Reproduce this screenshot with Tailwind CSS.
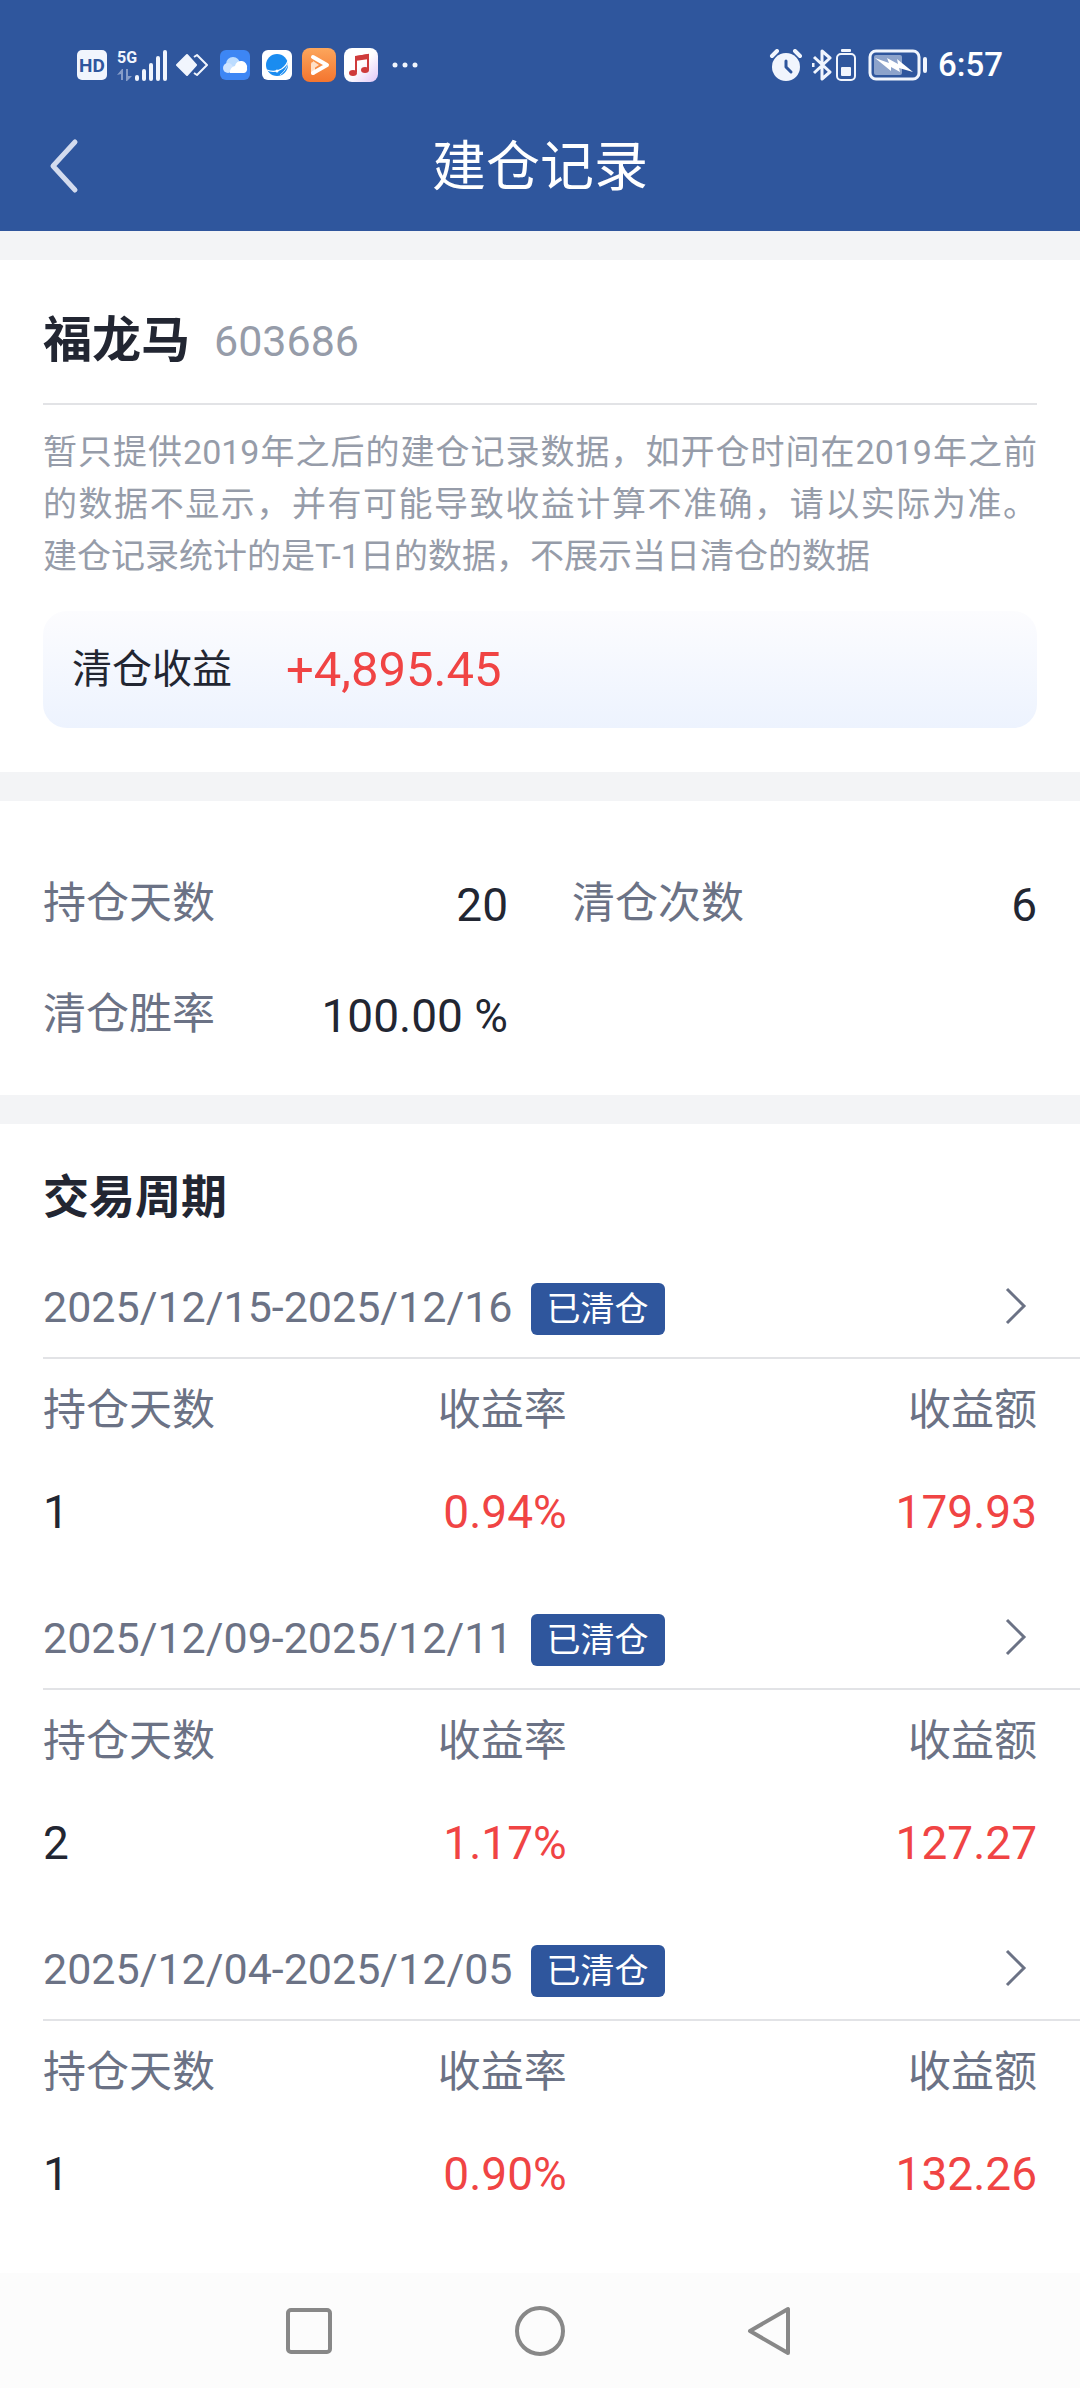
<!DOCTYPE html>
<html lang="zh-CN">
<head>
    <meta charset="UTF-8">
    <meta name="viewport" content="width=device-width, initial-scale=1.0">
    <title>建仓记录</title>
    <script src="https://cdn.jsdelivr.net/npm/@tailwindcss/browser@4"></script>
</head>
<body class="min-h-screen flex flex-col bg-gray-100 text-[#222632] font-['Roboto','Noto_Sans_CJK_SC',sans-serif]">
    <!-- Header -->
    <header class="bg-[#2f569d] text-white">
        <!-- Status bar -->
        <div class="h-[104px] pt-[26px] px-[77px] flex items-center justify-between">
            <div class="flex items-center">
                <svg class="w-[30px] h-[30px]" viewBox="0 0 30 30">
                    <rect width="30" height="30" rx="5" fill="#f1f5fd"/>
                    <text x="15" y="22" text-anchor="middle" font-family="Roboto" font-weight="700" font-size="19" fill="#2f569d">HD</text>
                </svg>
                <svg class="w-[51px] h-[34px] ml-[10px]" viewBox="0 0 51 34" fill="#f1f5fd">
                    <text x="0" y="15" font-family="Roboto" font-weight="700" font-size="16">5G</text>
                    <path d="M0 27l5-6h1v11H4v-6zM9 21h2v7h4l-5 5H9z" opacity=".45"/>
                    <rect x="18" y="27" width="4" height="6" rx="2"/>
                    <rect x="25" y="21" width="4" height="12" rx="2"/>
                    <rect x="32" y="15" width="4" height="18" rx="2"/>
                    <rect x="39" y="8" width="4" height="25" rx="2"/>
                    <rect x="46" y="2" width="4" height="31" rx="2"/>
                </svg>
                <svg class="w-[32px] h-[24px] ml-[8px]" viewBox="0 0 32 24">
                    <path d="M11 2l9 10-9 10L1 12z" fill="#f1f5fd" stroke="#f1f5fd" stroke-width="2" stroke-linejoin="round"/>
                    <path d="M18 4l3-2 10 10-10 10-3-2" fill="none" stroke="#f1f5fd" stroke-width="2" stroke-linejoin="round"/>
                </svg>
                <svg class="w-[30px] h-[30px] ml-[12px]" viewBox="0 0 30 30">
                    <rect width="30" height="30" rx="6" fill="#3d86f4"/>
                    <circle cx="13" cy="14" r="7" fill="#bcdcff"/>
                    <circle cx="8" cy="18" r="5" fill="#cfe4ff"/>
                    <path d="M10 23a6 6 0 0 1 5-7 6 6 0 0 1 12 2 4 4 0 0 1-3 5z" fill="#fff"/>
                </svg>
                <svg class="w-[30px] h-[30px] ml-[12px]" viewBox="0 0 30 30">
                    <rect width="30" height="30" rx="6" fill="#fff"/>
                    <circle cx="15" cy="15" r="11" fill="#1a8cf0"/>
                    <path d="M5 20c7 3 17 1 21-9" fill="none" stroke="#fff" stroke-width="1.2"/>
                    <path d="M18 25c4-3 7-7 8-12" fill="none" stroke="#fff" stroke-width="0.8"/>
                    <circle cx="15" cy="21" r="1.5" fill="#fff"/>
                </svg>
                <svg class="w-[34px] h-[34px] ml-[10px]" viewBox="0 0 34 34">
                    <defs>
                        <linearGradient id="video" x1="0" y1="0" x2="0" y2="1"><stop stop-color="#fca65c"/><stop offset="1" stop-color="#f4752f"/></linearGradient>
                    </defs>
                    <rect width="34" height="34" rx="8" fill="url(#video)"/>
                    <path d="M11 16v9" stroke="#ffe0c8" stroke-width="4" stroke-linecap="round"/>
                    <path d="M11 13l6 4-6 4z" fill="#ffe0c8"/>
                    <path d="M11 9l14 8-14 8" fill="none" stroke="#fff" stroke-width="4" stroke-linejoin="round" stroke-linecap="round"/>
                </svg>
                <svg class="w-[34px] h-[34px] ml-[8px]" viewBox="0 0 34 34">
                    <defs>
                        <linearGradient id="music" x1="0" y1="0" x2="1" y2="1"><stop offset=".5" stop-color="#fff"/><stop offset="1" stop-color="#e2c6f7"/></linearGradient>
                    </defs>
                    <rect width="34" height="34" rx="8" fill="url(#music)"/>
                    <path d="M12 24V9l12-2v15" fill="none" stroke="#cf3b3b" stroke-width="2"/>
                    <path d="M11 8l14-2v5l-14 2z" fill="#cf3b3b"/>
                    <ellipse cx="9" cy="25" rx="4" ry="3" fill="#cf3b3b"/>
                    <ellipse cx="21" cy="22" rx="4" ry="3" fill="#cf3b3b"/>
                </svg>
                <svg class="w-[26px] h-[6px] ml-[14px]" viewBox="0 0 26 6" fill="#f1f5fd">
                    <circle cx="3" cy="3" r="2.5"/><circle cx="13" cy="3" r="2.5"/><circle cx="23" cy="3" r="2.5"/>
                </svg>
            </div>
            <div class="flex items-center">
                <svg class="w-[34px] h-[32px]" viewBox="0 0 34 32">
                    <circle cx="17" cy="18" r="14" fill="#f1f5fd"/>
                    <path d="M3 7l5-5M31 7l-5-5" stroke="#f1f5fd" stroke-width="4" stroke-linecap="round"/>
                    <path d="M17 12v6l5 5" fill="none" stroke="#2f569d" stroke-width="3" stroke-linecap="round" stroke-linejoin="round"/>
                </svg>
                <svg class="w-[20px] h-[32px] ml-[9px]" viewBox="0 0 20 32" fill="none" stroke="#f1f5fd" stroke-width="3" stroke-linejoin="round">
                    <path d="M2 8l16 15-8 7V2l8 7L2 24M1 14v4"/>
                </svg>
                <svg class="w-[20px] h-[32px] ml-[4px]" viewBox="0 0 20 32">
                    <rect x="5" y="0" width="10" height="3" rx="1" fill="#f1f5fd"/>
                    <rect x="1" y="5" width="18" height="26" rx="4" fill="none" stroke="#f1f5fd" stroke-width="2"/>
                    <rect x="5" y="18" width="10" height="9" rx="1" fill="#f1f5fd"/>
                </svg>
                <svg class="w-[60px] h-[32px] ml-[12px]" viewBox="0 0 60 32">
                    <rect x="2" y="2" width="49" height="28" rx="6" fill="none" stroke="#f1f5fd" stroke-width="3"/>
                    <rect x="6" y="6" width="28" height="20" rx="2" fill="#8da3cb"/>
                    <path d="M7 9l14 5-2-5 11 6-1-5 16 13-14-4 1 4-9-5v4z" fill="#fff"/>
                    <rect x="55" y="8" width="4" height="16" rx="2" fill="#f1f5fd"/>
                </svg>
                <span class="ml-[10px] text-[33px] leading-[40px] font-medium">6:57</span>
            </div>
        </div>
        <!-- Title bar -->
        <div class="h-[127px] px-[43px] grid grid-cols-[1fr_auto_1fr] items-center">
            <button type="button" aria-label="返回" class="w-10 h-16 flex">
                <svg class="w-[36px] h-[60px]" viewBox="0 0 36 60" fill="none" stroke="#d3dbee" stroke-width="5" stroke-linecap="round" stroke-linejoin="round">
                    <path d="M32 6L10 30l22 24"/>
                </svg>
            </button>
            <h1 class="text-[54px] leading-[80px]">建仓记录</h1>
        </div>
    </header>

    <!-- Stock summary -->
    <section class="mt-[29px] px-[43px] pb-[44px] bg-white">
        <div class="h-[145px] pt-[18px] flex items-center gap-[24px] border-b-2 border-[#e2e3e6]">
            <h2 class="text-[49px] leading-[64px] font-bold">福龙马</h2>
            <span class="text-[43px] leading-[64px] text-[#969ca9]">603686</span>
        </div>
        <p class="mt-[21px] text-[34px] leading-[52px] text-justify text-[#969ca9]">暂只提供2019年之后的建仓记录数据，如开仓时间在2019年之前的数据不显示，并有可能导致收益计算不准确，请以实际为准。<span class="whitespace-nowrap">建仓记录</span>统计的是T-1日的数据，不展示当日清仓的数据</p>
        <div class="mt-[29px] h-[117px] px-[29px] flex items-center gap-[54px] rounded-3xl bg-linear-to-b from-[#fcfcfe] to-[#edf3fe]">
            <span class="text-[40px] leading-[60px]">清仓收益</span>
            <span class="text-[49px] leading-[60px] text-[#f04444]">+4,895.45</span>
        </div>
    </section>

    <!-- Stats -->
    <dl class="mt-[29px] px-[43px] pt-[46px] pb-[26px] grid grid-cols-2 gap-x-16 bg-white">
        <div class="h-[111px] pt-[24px] flex items-start justify-between">
            <dt class="text-[43px] leading-[64px] text-[#6b7285]">持仓天数</dt>
            <dd class="text-[46px] leading-[68px]">20</dd>
        </div>
        <div class="h-[111px] pt-[24px] flex items-start justify-between">
            <dt class="text-[43px] leading-[64px] text-[#6b7285]">清仓次数</dt>
            <dd class="text-[46px] leading-[68px]">6</dd>
        </div>
        <div class="h-[111px] pt-[24px] flex items-start justify-between">
            <dt class="text-[43px] leading-[64px] text-[#6b7285]">清仓胜率</dt>
            <dd class="text-[46px] leading-[68px]">100.00 %</dd>
        </div>
    </dl>

    <!-- Trade cycles -->
    <main class="mt-[29px] pl-[43px] pt-[44px] pb-[48px] grow bg-white">
        <h2 class="mb-[35px] text-[46px] leading-[58px] font-bold">交易周期</h2>

        <div class="flex flex-col gap-[29px]">
            <article>
                <a href="#" class="h-[98px] pt-[22px] pr-[53px] flex items-start justify-between border-b-2 border-[#e2e3e6]">
                    <span class="flex items-start gap-[18px]">
                        <span class="text-[43px] leading-[48px] text-[#6b7285]">2025/12/15-2025/12/16</span>
                        <span class="px-[16px] text-[34px] leading-[52px] rounded-md bg-[#2f569d] text-white">已清仓</span>
                    </span>
                    <svg class="w-[22px] h-[46px]" viewBox="0 0 22 36" fill="none" stroke="#6b7285" stroke-width="3"><path d="M2 1l17 17L2 35"/></svg>
                </a>
                <table class="w-full table-fixed">
                    <thead>
                        <tr class="h-[102px] text-[43px] leading-[64px] text-[#6b7285]">
                            <th class="w-[30%] p-0 font-normal text-left">持仓天数</th>
                            <th class="p-0 font-normal text-right">收益率</th>
                            <th class="w-[49.5%] p-0 pr-[43px] font-normal text-right">收益额</th>
                        </tr>
                    </thead>
                    <tbody>
                        <tr class="h-[102px] text-[46px] leading-[64px]">
                            <td class="p-0">1</td>
                            <td class="p-0 text-right text-[#f04444]">0.94%</td>
                            <td class="p-0 pr-[43px] text-right text-[#f04444]">179.93</td>
                        </tr>
                    </tbody>
                </table>
            </article>

            <article>
                <a href="#" class="h-[98px] pt-[22px] pr-[53px] flex items-start justify-between border-b-2 border-[#e2e3e6]">
                    <span class="flex items-start gap-[18px]">
                        <span class="text-[43px] leading-[48px] text-[#6b7285]">2025/12/09-2025/12/11</span>
                        <span class="px-[16px] text-[34px] leading-[52px] rounded-md bg-[#2f569d] text-white">已清仓</span>
                    </span>
                    <svg class="w-[22px] h-[46px]" viewBox="0 0 22 36" fill="none" stroke="#6b7285" stroke-width="3"><path d="M2 1l17 17L2 35"/></svg>
                </a>
                <table class="w-full table-fixed">
                    <thead>
                        <tr class="h-[102px] text-[43px] leading-[64px] text-[#6b7285]">
                            <th class="w-[30%] p-0 font-normal text-left">持仓天数</th>
                            <th class="p-0 font-normal text-right">收益率</th>
                            <th class="w-[49.5%] p-0 pr-[43px] font-normal text-right">收益额</th>
                        </tr>
                    </thead>
                    <tbody>
                        <tr class="h-[102px] text-[46px] leading-[64px]">
                            <td class="p-0">2</td>
                            <td class="p-0 text-right text-[#f04444]">1.17%</td>
                            <td class="p-0 pr-[43px] text-right text-[#f04444]">127.27</td>
                        </tr>
                    </tbody>
                </table>
            </article>

            <article>
                <a href="#" class="h-[98px] pt-[22px] pr-[53px] flex items-start justify-between border-b-2 border-[#e2e3e6]">
                    <span class="flex items-start gap-[18px]">
                        <span class="text-[43px] leading-[48px] text-[#6b7285]">2025/12/04-2025/12/05</span>
                        <span class="px-[16px] text-[34px] leading-[52px] rounded-md bg-[#2f569d] text-white">已清仓</span>
                    </span>
                    <svg class="w-[22px] h-[46px]" viewBox="0 0 22 36" fill="none" stroke="#6b7285" stroke-width="3"><path d="M2 1l17 17L2 35"/></svg>
                </a>
                <table class="w-full table-fixed">
                    <thead>
                        <tr class="h-[102px] text-[43px] leading-[64px] text-[#6b7285]">
                            <th class="w-[30%] p-0 font-normal text-left">持仓天数</th>
                            <th class="p-0 font-normal text-right">收益率</th>
                            <th class="w-[49.5%] p-0 pr-[43px] font-normal text-right">收益额</th>
                        </tr>
                    </thead>
                    <tbody>
                        <tr class="h-[102px] text-[46px] leading-[64px]">
                            <td class="p-0">1</td>
                            <td class="p-0 text-right text-[#f04444]">0.90%</td>
                            <td class="p-0 pr-[43px] text-right text-[#f04444]">132.26</td>
                        </tr>
                    </tbody>
                </table>
            </article>
        </div>
    </main>

    <!-- System navigation -->
    <nav class="h-[116px] flex items-center justify-center gap-[180px] bg-[#fcfcfc]">
        <button type="button" aria-label="最近任务">
            <svg class="w-[50px] h-[50px]" viewBox="0 0 50 50" fill="none" stroke="#888" stroke-width="4"><rect x="3" y="4" width="42" height="42" rx="3"/></svg>
        </button>
        <button type="button" aria-label="主页">
            <svg class="w-[50px] h-[50px]" viewBox="0 0 50 50" fill="none" stroke="#888" stroke-width="4"><circle cx="25" cy="25" r="23"/></svg>
        </button>
        <button type="button" aria-label="返回">
            <svg class="w-[50px] h-[50px]" viewBox="0 0 50 50" fill="none" stroke="#888" stroke-width="4" stroke-linejoin="round"><path d="M43 3v44L5 25z"/></svg>
        </button>
    </nav>
</body>
</html>
